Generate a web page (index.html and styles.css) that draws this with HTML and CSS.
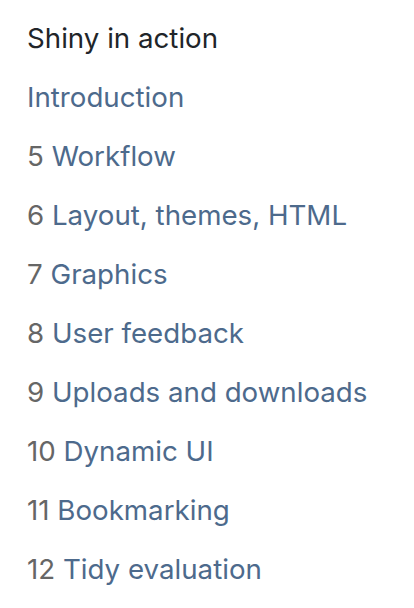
FILE: index.html
```html
<!DOCTYPE html>
<html>
<head>
<meta charset="utf-8">
<link rel="stylesheet" href="styles.css">
</head>
<body>
<nav class="toc">
  <div class="part">Shiny in action</div>
  <ul class="chapters">
    <li><a href="#">Introduction</a></li>
    <li><span class="num">5</span> <a href="#">Workflow</a></li>
    <li><span class="num">6</span> <a href="#">Layout, themes, HTML</a></li>
    <li><span class="num">7</span> <a href="#">Graphics</a></li>
    <li><span class="num">8</span> <a href="#">User feedback</a></li>
    <li><span class="num">9</span> <a href="#">Uploads and downloads</a></li>
    <li><span class="num">10</span> <a href="#">Dynamic UI</a></li>
    <li><span class="num">11</span> <a href="#">Bookmarking</a></li>
    <li><span class="num">12</span> <a href="#">Tidy evaluation</a></li>
  </ul>
</nav>
</body>
</html>
```
FILE: styles.css
```css
html, body {
  margin: 0;
  padding: 0;
  background: #ffffff;
}
body {
  font-family: Inter, "Noto Sans", sans-serif;
  font-size: 27.7px;
}
.toc {
  padding: 18px 0 0 27px;
}
.part {
  color: #212529;
  line-height: 40px;
  margin-bottom: 19px;
}
.chapters {
  list-style: none;
  margin: 0;
  padding: 0;
  display: flex;
  flex-direction: column;
  gap: 19px;
}
.chapters li {
  line-height: 40px;
  color: #666666;
  white-space: nowrap;
}
.chapters a {
  color: #4d6a8c;
  text-decoration: none;
}
```
